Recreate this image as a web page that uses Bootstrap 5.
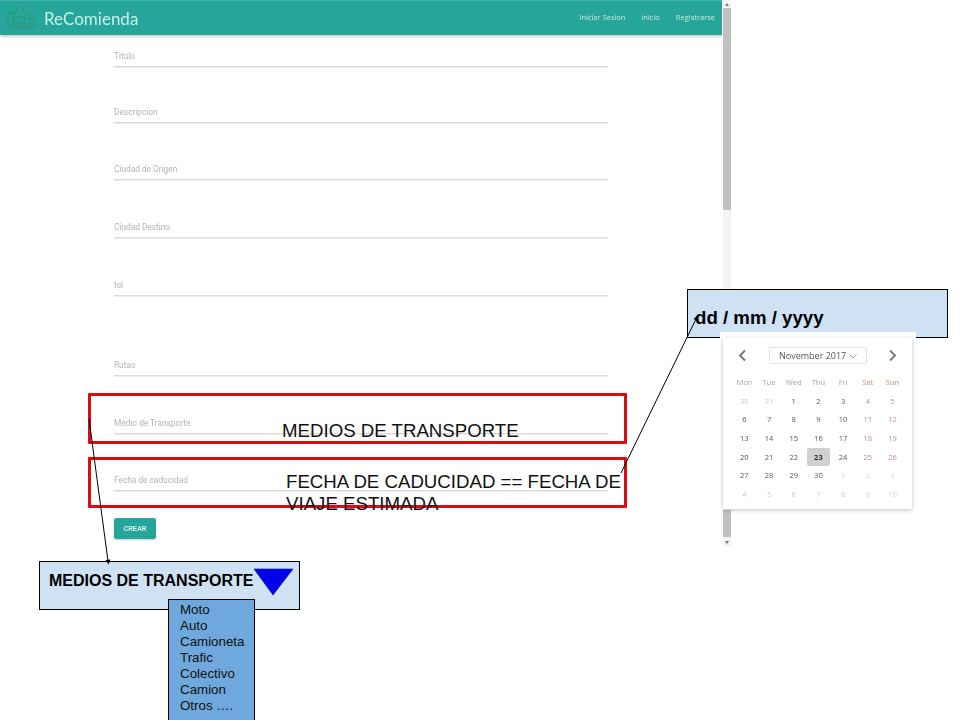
<!DOCTYPE html>
<html lang="es">
<head>
<meta charset="utf-8">
<title>ReComienda</title>
<link href="https://cdn.jsdelivr.net/npm/bootstrap@5.3.0/dist/css/bootstrap.min.css" rel="stylesheet">
<style>
html,body{margin:0;background:#fff;overflow:hidden}
body{width:960px;height:720px;position:relative;font-family:"Liberation Sans",Arial,sans-serif;color:#000}
.shot{width:722px;height:546px;overflow:hidden;filter:blur(.45px)}
.topbar{height:35px;background:#26a69a;box-shadow:0 1px 3px rgba(0,0,0,.3);padding:0 7px 0 7px;border-top:1px solid #3fb5aa}
.brandname{font-family:Lato,sans-serif;font-size:17px;color:#c9f1ec;text-decoration:none;line-height:35px;margin-left:8px}
.toplink{font-family:"Open Sans",sans-serif;font-size:7.5px;color:#c3e8e3;text-decoration:none}
.formbox{margin-left:114px;width:494px;padding-top:7px}
.fieldrow{height:58px}
.rowshort{height:56px}
.rowmid{height:57px}
.rowlast{height:52px}
.fieldtext{font-family:Roboto,sans-serif;font-size:8.3px;color:#b4b4b4;line-height:12px;height:25px;border-bottom:1px solid #dcdcdc;box-shadow:0 1px 0 #ececec;padding-top:8px}
.fieldgap{margin-top:22px}
.crearbtn{display:block;background:#26a69a;color:#d9f3ef;font-family:"Liberation Sans",sans-serif;font-size:6.5px;font-weight:700;border:0;border-radius:2px;width:42px;height:21px;padding:0;box-shadow:0 1px 2px rgba(0,0,0,.2)}
.scrolltrack{position:absolute;left:723px;top:0;width:8px;height:546px;background:#f3f3f3;filter:blur(.3px)}
.scrollthumb{position:absolute;left:0;width:8px;background:#c1c1c1}
.scrollarrow{position:absolute;left:2px;width:0;height:0;border-left:2px solid transparent;border-right:2px solid transparent}
.redbox{position:absolute;left:88px;width:539px;border:3px solid #e00b12;border-radius:1px}
.overlaytext{position:absolute;font-size:18.67px;line-height:22px;color:#111}
.callout{position:absolute;background:#cfe2f3;border:1px solid #000;font-weight:700;color:#000}
.datepop{position:absolute;left:723px;top:338px;width:189px;height:171px;background:#fff;box-shadow:0 1px 4px rgba(0,0,0,.25);font-family:"Open Sans",sans-serif;font-size:7.5px;color:#555;filter:blur(.35px)}
.dateband{position:absolute;left:720px;top:332px;width:196px;height:6px;background:#fff}
.monthbox{position:absolute;left:46px;top:9px;width:98px;height:17px;border:1px solid #e2e2e2;border-radius:2px;font-size:9px;color:#555;line-height:15px;padding-left:9px;white-space:nowrap}
.navchev{position:absolute;top:11px}
.dategrid{position:absolute;left:9px;top:35px;display:grid;grid-template-columns:repeat(7,24.7px);grid-auto-rows:18.7px;text-align:center;line-height:18.7px}
.dategrid span{display:block}
.hd{color:#a5a5a5}.hdw{color:#c98a8a}.mut{color:#c9c9c9}.we{color:#c88a8a}.wemut{color:#ecd0d0}
.today{background:#d0d0d0;border-radius:2px;font-weight:700;color:#333;margin:0 1px}
.optlist{position:absolute;left:168px;top:599px;width:87px;height:122px;background:#6fa8dc;border:1px solid #000;padding:2px 0 0 11px;font-size:13.33px;line-height:16px;color:#111}
.lines{position:absolute;left:0;top:0;pointer-events:none}
</style>
</head>
<body>
<div class="shot">
  <nav class="topbar d-flex align-items-center justify-content-between">
    <div class="d-flex align-items-center">
      <svg width="29" height="24" viewBox="0 0 29 24" fill="none" stroke="#2a9a7e" stroke-width="1.4" aria-hidden="true"><path d="M7 21H4c-2 0-3-1-3-3v-3c-1-1-1-3 0-4V9c0-2 1-2 3-2h5c0-3 1-6 4-6s4 3 4 6h3c1 0 2 1 2 3v3h3c2 0 3 1 3 3v3c0 2-1 2-3 2h-2"/><circle cx="9" cy="20" r="2.5"/><circle cx="22" cy="20" r="2.5"/><path d="M12 21h7M6 11h12v6H6z"/></svg>
      <a class="brandname" href="#">ReComienda</a>
    </div>
    <div class="d-flex gap-3 align-items-center">
      <a class="toplink" href="#">Iniciar Sesion</a>
      <a class="toplink" href="#">inicio</a>
      <a class="toplink" href="#">Registrarse</a>
    </div>
  </nav>
  <form class="formbox">
    <div class="fieldrow rowshort"><div class="fieldtext">Titulo</div></div>
    <div class="fieldrow rowmid"><div class="fieldtext">Descripcion</div></div>
    <div class="fieldrow"><div class="fieldtext">Ciudad de Origen</div></div>
    <div class="fieldrow"><div class="fieldtext">Ciudad Destino</div></div>
    <div class="fieldrow"><div class="fieldtext">tel</div></div>
    <div class="fieldrow fieldgap"><div class="fieldtext">Rutas</div></div>
    <div class="fieldrow rowmid"><div class="fieldtext">Medio de Transporte</div></div>
    <div class="fieldrow rowlast"><div class="fieldtext">Fecha de caducidad</div></div>
    <button type="button" class="crearbtn">CREAR</button>
  </form>
</div>
<div class="scrolltrack">
  <div class="scrollarrow" style="top:3px;border-bottom:3px solid #777"></div>
  <div class="scrollthumb" style="top:8px;height:202px"></div>
  <div class="scrollthumb" style="top:510px;height:27px"></div>
  <div class="scrollarrow" style="top:541px;border-top:3px solid #777"></div>
</div>

<div class="redbox" style="top:393px;height:51px"></div>
<div class="redbox" style="top:457px;height:51px"></div>
<div class="overlaytext" style="left:282px;top:420px">MEDIOS DE TRANSPORTE</div>
<div class="overlaytext" style="left:286px;top:471px;width:345px">FECHA DE CADUCIDAD == FECHA DE VIAJE ESTIMADA</div>

<div class="callout" style="left:687px;top:289px;width:261px;height:49px;font-size:18.67px;padding:17px 0 0 7px;line-height:22px">dd / mm / yyyy</div>
<div class="dateband"></div>
<div class="datepop">
  <svg class="navchev" style="left:15px" width="9" height="13" viewBox="0 0 9 13" fill="none" stroke="#777" stroke-width="1.9"><path d="M7 1.5 2 6.5l5 5"/></svg>
  <div class="monthbox">November 2017 <svg width="8" height="5" viewBox="0 0 8 5" fill="none" stroke="#999"><path d="M.5.5 4 4 7.5.5"/></svg></div>
  <svg class="navchev" style="left:165px" width="9" height="13" viewBox="0 0 9 13" fill="none" stroke="#777" stroke-width="1.9"><path d="M2 1.5l5 5-5 5"/></svg>
  <div class="dategrid">
    <span class="hd">Mon</span><span class="hd">Tue</span><span class="hd">Wed</span><span class="hd">Thu</span><span class="hd">Fri</span><span class="hdw">Sat</span><span class="hdw">Sun</span>
    <span class="mut">30</span><span class="mut">31</span><span>1</span><span>2</span><span>3</span><span class="we">4</span><span class="we">5</span>
    <span>6</span><span>7</span><span>8</span><span>9</span><span>10</span><span class="we">11</span><span class="we">12</span>
    <span>13</span><span>14</span><span>15</span><span>16</span><span>17</span><span class="we">18</span><span class="we">19</span>
    <span>20</span><span>21</span><span>22</span><span class="today">23</span><span>24</span><span class="we">25</span><span class="we">26</span>
    <span>27</span><span>28</span><span>29</span><span>30</span><span class="mut">1</span><span class="wemut">2</span><span class="wemut">3</span>
    <span class="mut">4</span><span class="mut">5</span><span class="mut">6</span><span class="mut">7</span><span class="mut">8</span><span class="wemut">9</span><span class="wemut">10</span>
  </div>
</div>

<div class="callout" style="left:39px;top:561px;width:261px;height:49px;font-size:16px;padding:10px 0 0 9px;line-height:18px">MEDIOS DE TRANSPORTE</div>
<div class="optlist">Moto<br>Auto<br>Camioneta<br>Trafic<br>Colectivo<br>Camion<br>Otros ….</div>

<svg class="lines" width="960" height="720" aria-hidden="true">
  <polygon points="254,569 293,569 273,595" fill="#0000ee" stroke="#1a1a80" stroke-width=".7"/>
  <line x1="89" y1="419" x2="108" y2="561" stroke="#000" stroke-width="1"/>
  <polygon points="105.5,560 110.5,559.5 108.5,564.5" fill="#000"/>
  <line x1="621" y1="473" x2="696" y2="319" stroke="#000" stroke-width="1"/>
  <polygon points="693.5,319 698.5,321 697.5,315.5" fill="#000"/>
</svg>
</body>
</html>
